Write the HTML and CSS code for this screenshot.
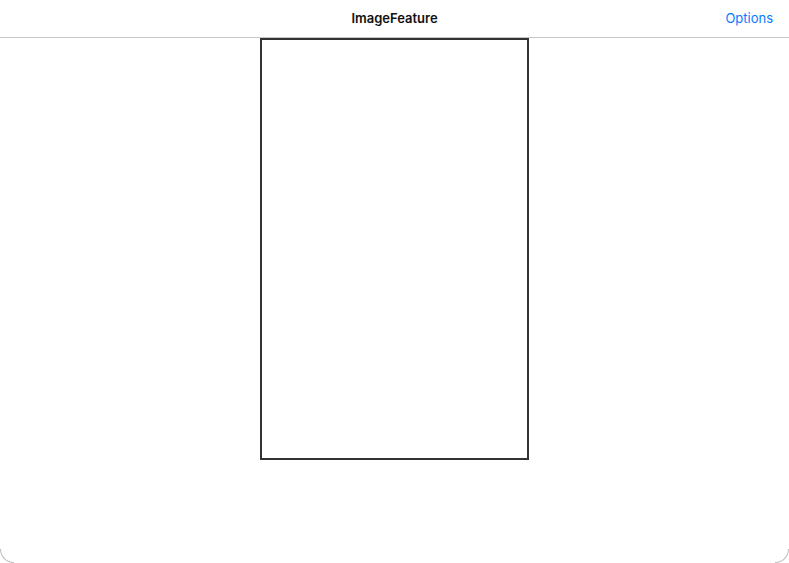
FILE: index.html
```html
<!DOCTYPE html>
<html>
<head>
<meta charset="utf-8">
<link rel="stylesheet" href="styles.css">
</head>
<body>
<div class="screen">
  <header class="navbar">
    <div class="nav-side"></div>
    <div class="nav-title">ImageFeature</div>
    <div class="nav-side nav-right"><span class="nav-button">Options</span></div>
  </header>
  <main class="content">
    <div class="image-frame"></div>
  </main>
  <div class="corner corner-left"></div>
  <div class="corner corner-right"></div>
</div>
</body>
</html>
```
FILE: styles.css
```css
html, body {
  margin: 0;
  padding: 0;
  background: #ffffff;
}
body {
  font-family: Inter, "Liberation Sans", Arial, sans-serif;
}
.screen {
  position: relative;
  width: 789px;
  height: 563px;
  overflow: hidden;
  background: #ffffff;
}
.navbar {
  height: 38px;
  border-bottom: 1px solid #c6c6c8;
  display: flex;
  align-items: center;
  padding: 0 16px 2px;
  box-sizing: border-box;
}
.nav-side {
  flex: 1;
  display: flex;
}
.nav-right {
  justify-content: flex-end;
}
.nav-title {
  font-size: 13px;
  font-weight: 600;
  color: #111111;
}
.nav-button {
  font-size: 13px;
  color: #0a7aff;
}
.content {
  display: flex;
  justify-content: center;
}
.image-frame {
  width: 269px;
  height: 422px;
  border: 2px solid #333333;
  box-sizing: border-box;
}
.corner {
  position: absolute;
  bottom: 0;
  width: 14px;
  height: 14px;
  box-sizing: border-box;
}
.corner-left {
  left: 0;
  border-left: 1px solid #bdbdbd;
  border-bottom: 1px solid #bdbdbd;
  border-bottom-left-radius: 14px;
}
.corner-right {
  right: 0;
  border-right: 1px solid #bdbdbd;
  border-bottom: 1px solid #bdbdbd;
  border-bottom-right-radius: 14px;
}
```
